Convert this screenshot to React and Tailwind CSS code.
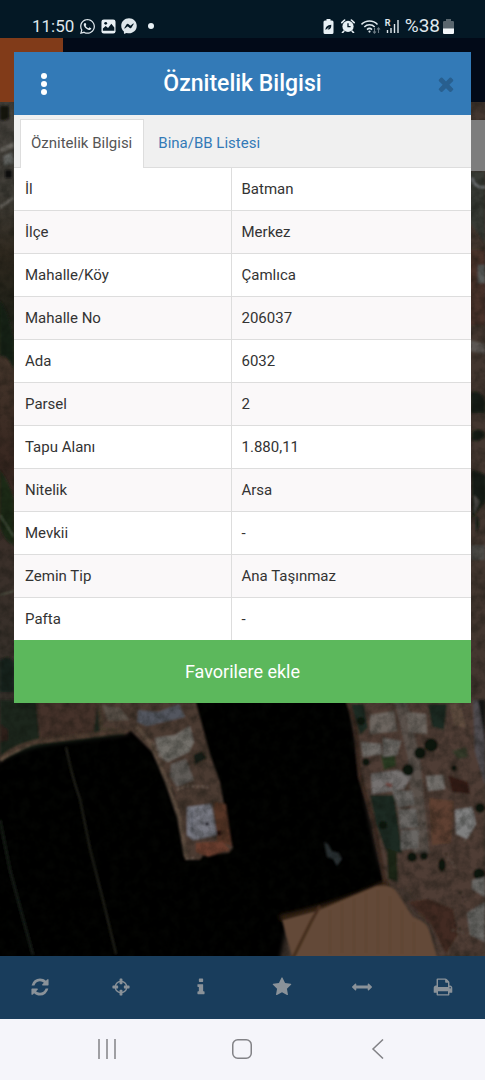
import React, { useState } from 'react'
import { FaWhatsapp, FaFacebookMessenger } from 'react-icons/fa'

const rows = [
  ['İl', 'Batman'],
  ['İlçe', 'Merkez'],
  ['Mahalle/Köy', 'Çamlıca'],
  ['Mahalle No', '206037'],
  ['Ada', '6032'],
  ['Parsel', '2'],
  ['Tapu Alanı', '1.880,11'],
  ['Nitelik', 'Arsa'],
  ['Mevkii', '-'],
  ['Zemin Tip', 'Ana Taşınmaz'],
  ['Pafta', '-'],
]

const tabs = ['Öznitelik Bilgisi', 'Bina/BB Listesi']

const CLOSE = 'M1490 1322q0 40-28 68l-136 136q-28 28-68 28t-68-28l-294-294-294 294q-28 28-68 28t-68-28l-136-136q-28-28-28-68t28-68l294-294-294-294q-28-28-28-68t28-68l136-136q28-28 68-28t68 28l294 294 294-294q28-28 68-28t68 28l136 136q28 28 28 68t-28 68l-294 294 294 294q28 28 28 68z'

const tools = [
  { label: 'Yenile', d: 'M1639 1056q0 5-1 7-64 268-268 434.5t-478 166.5q-146 0-282.5-55t-243.5-157l-129 129q-19 19-45 19t-45-19-19-45v-448q0-26 19-45t45-19h448q26 0 45 19t19 45-19 45l-137 137q71 66 161 102t187 36q134 0 250-65t186-179q11-17 53-117 8-23 30-23h192q13 0 22.5 9.5t9.5 22.5zm25-800v448q0 26-19 45t-45 19h-448q-26 0-45-19t-19-45 19-45l138-138q-148-137-349-137-134 0-250 65t-186 179q-11 17-53 117-8 23-30 23h-199q-13 0-22.5-9.5t-9.5-22.5v-7q65-268 270-434.5t480-166.5q146 0 284 55.5t245 156.5l130-129q19-19 45-19t45 19 19 45z' },
  { label: 'Konum', d: 'M1325 1024h-109q-26 0-45-19t-19-45v-128q0-26 19-45t45-19h109q-32-108-112.5-188.5t-188.5-112.5v109q0 26-19 45t-45 19h-128q-26 0-45-19t-19-45v-109q-108 32-188.5 112.5t-112.5 188.5h109q26 0 45 19t19 45v128q0 26-19 45t-45 19h-109q32 108 112.5 188.5t188.5 112.5v-109q0-26 19-45t45-19h128q26 0 45 19t19 45v109q108-32 188.5-112.5t112.5-188.5zm339-192v128q0 26-19 45t-45 19h-143q-37 161-154.5 278.5t-278.5 154.5v143q0 26-19 45t-45 19h-128q-26 0-45-19t-19-45v-143q-161-37-278.5-154.5t-154.5-278.5h-143q-26 0-45-19t-19-45v-128q0-26 19-45t45-19h143q37-161 154.5-278.5t278.5-154.5v-143q0-26 19-45t45-19h128q26 0 45 19t19 45v143q161 37 278.5 154.5t154.5 278.5h143q26 0 45 19t19 45z' },
  { label: 'Bilgi', d: 'M1216 1344v128q0 26-19 45t-45 19h-512q-26 0-45-19t-19-45v-128q0-26 19-45t45-19h64v-384h-64q-26 0-45-19t-19-45v-128q0-26 19-45t45-19h384q26 0 45 19t19 45v576h64q26 0 45 19t19 45zm-128-1152v192q0 26-19 45t-45 19h-256q-26 0-45-19t-19-45v-192q0-26 19-45t45-19h256q26 0 45 19t19 45z' },
  { label: 'Favoriler', d: 'M1728 647q0 22-26 48l-363 354 86 500q1 7 1 20 0 21-10.5 35.5t-30.5 14.5q-19 0-40-12l-449-236-449 236q-22 12-40 12-21 0-31.5-14.5t-10.5-35.5q0-6 2-20l86-500-364-354q-25-27-25-48 0-37 56-46l502-73 225-455q19-41 49-41t49 41l225 455 502 73q56 9 56 46z' },
  { label: 'Ölçüm', d: 'M1792 896q0 26-19 45l-256 256q-19 19-45 19t-45-19-19-45v-128h-1024v128q0 26-19 45t-45 19-45-19l-256-256q-19-19-19-45t19-45l256-256q19-19 45-19t45 19 19 45v128h1024v-128q0-26 19-45t45-19 45 19l256 256q19 19 19 45z' },
  { label: 'Yazdır', d: 'M448 1536h896v-256h-896v256zm0-640h896v-384h-160q-40 0-68-28t-28-68v-160h-640v640zm1152 64q0-26-19-45t-45-19-45 19-19 45 19 45 45 19 45-19 19-45zm128 0v416q0 13-9.5 22.5t-22.5 9.5h-224v160q0 40-28 68t-68 28h-960q-40 0-68-28t-28-68v-160h-224q-13 0-22.5-9.5t-9.5-22.5v-416q0-79 56.5-135.5t135.5-56.5h64v-544q0-40 28-68t68-28h672q40 0 88 20t76 48l152 152q28 28 48 76t20 88v256h64q79 0 135.5 56.5t56.5 135.5z' },
]

function Icon({ d, className }){
  return (
    <svg viewBox="0 0 1792 1792" className={className} fill="currentColor" aria-hidden="true">
      <path d={d} />
    </svg>
  )
}

function StatusBar(){
  return (
    <header className="flex h-[38px] items-end justify-between bg-[#041825] pr-[31px] pl-8 text-[#dfe7ec]">
      <div className="flex h-6 items-center gap-[5px]">
        <span className="text-[17px] leading-6">11:50</span>
        <FaWhatsapp className="size-[17px]" />
        <svg viewBox="0 0 16 16" className="size-[15px]" aria-hidden="true">
          <rect x="0.5" y="0.5" width="15" height="15" rx="2.5" fill="#e8f0f5" />
          <circle cx="5" cy="4.6" r="1.5" fill="#041825" />
          <path d="M2 12.5V10l3-2.5 2.5 2L11 5l3.2 4v3.5z" fill="#041825" />
        </svg>
        <FaFacebookMessenger className="size-4" />
        <span className="ml-[6px] size-[6px] rounded-full bg-[#e8f0f5]" />
      </div>

      <div className="flex h-6 items-center">
        {/* battery saver */}
        <svg viewBox="0 0 11 15" className="mr-[7px] h-[15px] w-[11px]" aria-hidden="true">
          <path d="M3.5 0h4v1.5H9a1.5 1.5 0 0 1 1.5 1.5v10.5A1.5 1.5 0 0 1 9 15H2a1.5 1.5 0 0 1-1.5-1.5V3A1.5 1.5 0 0 1 2 1.5h1.5z" fill="#e8f0f5" />
          <path d="M2.500 11q-.5-4.500 5.800-5.200Q8.500 11 4.500 10.500L7 7.500z" fill="#041825" />
        </svg>
        {/* alarm */}
        <svg viewBox="0 0 14 14" className="mr-[6px] size-[14px]" aria-hidden="true">
          <circle cx="7" cy="7.4" r="5.6" fill="#e8f0f5" />
          <path d="M.8 3.6 3.6 1M13.2 3.6 10.4 1M2.8 12.2 1.5 13.6M11.2 12.2l1.3 1.4" stroke="#e8f0f5" strokeWidth="1.6" strokeLinecap="round" />
          <path d="M7 4.2v3.4h2.6" fill="none" stroke="#041825" strokeWidth="1.3" />
        </svg>
        {/* wifi */}
        <svg viewBox="0 0 20 15" className="mr-1 h-[15px] w-5" aria-hidden="true">
          <g fill="none" stroke="#dfe7ec" strokeWidth="1.5">
            <path d="M.5 5.400a11 11 0 0 1 16 0" />
            <path d="M3.300 8a7.200 7.200 0 0 1 10.400 0" />
            <path d="M6 10.600a3.600 3.600 0 0 1 5 0" />
          </g>
          <circle cx="8.5" cy="12.6" r="1.1" fill="#dfe7ec" />
          <path d="M13.5 9v5m-1.500-1.500 1.500 1.700 1.500-1.700M17.500 14V9m-1.500 1.500L17.500 8.800l1.500 1.700" fill="none" stroke="#6d7b84" strokeWidth="1.1" />
        </svg>
        {/* roaming signal */}
        <div className="relative mr-[6px] h-[15px] w-[14px]">
          <span className="absolute top-0 left-0 text-[9px] leading-[8px] font-bold">R</span>
          <svg viewBox="0 0 14 15" className="size-full" aria-hidden="true">
            <path d="M2.500 11v3M6 9v5M9.500 5v9M13 1v13" stroke="#dfe7ec" strokeWidth="1.4" />
          </svg>
        </div>
        <span className="text-[19px] leading-6">%38</span>
        <svg viewBox="0 0 11 15" className="ml-[3px] h-[15px] w-[11px]" aria-hidden="true">
          <path d="M3 0h5v2h1.5A1.300 1.300 0 0 1 11 3.300V10H0V3.300A1.300 1.300 0 0 1 1.300 2H3z" fill="#59666e" />
          <path d="M0 9.500h11v4A1.300 1.300 0 0 1 9.700 15H1.300A1.300 1.300 0 0 1 0 13.500z" fill="#f3f7fa" />
        </svg>
      </div>
    </header>
  )
}

// dimmed aerial imagery
function SatelliteMap(){
  return (
    <svg viewBox="0 38 485 918" preserveAspectRatio="xMidYMax slice" className="absolute inset-0 size-full" aria-hidden="true">
      <defs>
        <filter id="grain" x="0" y="0" width="100%" height="100%" colorInterpolationFilters="sRGB">
          <feTurbulence type="fractalNoise" baseFrequency="0.1" numOctaves="4" seed="4" />
          <feColorMatrix values="0 0 0 0 0.04  0 0 0 0 0.05  0 0 0 0 0.03  1.6 0 0 0 -0.55" />
        </filter>
        <filter id="soft"><feGaussianBlur stdDeviation="0.8" /></filter>
        <filter id="edge"><feGaussianBlur stdDeviation="2" /></filter>
        <linearGradient id="left" x1="0" y1="0" x2="0" y2="1">
          <stop offset="0" stopColor="#48443f" />
          <stop offset="0.15" stopColor="#403d37" />
          <stop offset="0.25" stopColor="#30291f" />
          <stop offset="0.36" stopColor="#1f2118" />
          <stop offset="0.42" stopColor="#44352b" />
          <stop offset="0.6" stopColor="#382720" />
          <stop offset="0.75" stopColor="#3b302a" />
          <stop offset="1" stopColor="#35302a" />
        </linearGradient>
      </defs>

      <rect y="38" width="485" height="918" fill="#43362f" />
      <rect y="102" width="20" height="605" fill="url(#left)" />
      <g filter="url(#soft)">
        {/* left margin */}
        <path d="M0 106h9v12q-5 4-9 2z" fill="#16130f" />
        <path d="M0 148l14-6v5L0 153zM0 205l14-9v3L0 209z" fill="#68655f" />
        <path d="M3 156l9-4 2 11-10 3z" fill="#666765" />
        <path d="M5 170h7v8H5z" fill="#11100e" />
        <path d="M0 300q8 10 14 40v30q-6-16-14-14z" fill="#172216" />
        <path d="M0 470q9 12 14 30v45q-9-3-14-18z" fill="#1c2c18" />
        <path d="M0 515l14 22M0 595l14-4" stroke="#64705a" strokeWidth="1" />
        <path d="M0 660q9-6 14 2v30H0z" fill="#18221a" />

        {/* right margin */}
        <path d="M470 171h15v72l-15-20z" fill="#383b35" />
        <path d="M472 178q3 11 13 9" fill="none" stroke="#73777a" strokeWidth="2" />
        <path d="M470 250h15v75h-15z" fill="#4a332a" />
        <path d="M470 340l15 4v10l-15-3z" fill="#5b5752" />
        <path d="M478 265h7v18h-7z" fill="#5a5b5a" />
        <path d="M471 393q10-4 14 8v12h-14zM472 432q8-5 13 3-5 8-13 5zM472 470l14 5v25l-14 18z" fill="#121c12" />
        <path d="M474 495l6 7-6 12zM471 545h14v15h-14z" fill="#4e4c47" />
        <path d="M476 515q6 8 0 18z" fill="#101a12" />

        {/* upper-left lots */}
        <path d="M0 700h130l-6 36L0 762z" fill="#1d251d" />
        <path d="M36 700h62l-5 36-53 7z" fill="#45332a" />
        <path d="M0 724l8 6v10l-8 2z" fill="#31201a" />
        <path d="M97 700h43l-8 25-32 8z" fill="#463a2e" />
      </g>

      {/* dark fields */}
      <path d="M-5 764q30-18 66-21l66-9 10-20 55-16h157l10 65 7 40 12 55 8 25-8 10-90 28-8 40H-5z" fill="#020302" filter="url(#edge)" />

      <g filter="url(#soft)">
        <path d="M0 760q14-14 40-19l85-10 15-10" fill="none" stroke="#4f3d30" strokeWidth="5" />
        <path d="M0 760l30-15" stroke="#6b5848" strokeWidth="1.5" />
        <path d="M66 747q6 30 14 52l10 50 14 55 12 50" fill="none" stroke="#25261f" strokeWidth="2" />
        <path d="M0 820l10 50 8 30 15 55" fill="none" stroke="#171c18" strokeWidth="3" />
        <path d="M324 842l4 2 4 7 7 2 3 6-5 7-4-7-6-2z" fill="#2c3335" />

        {/* peninsula */}
        <path d="M100 702h96l14 52 10 28 9 50 4 16-4 5-25 2-4 5-15 0-4-32-7-35-18-37-26-26-27-3z" fill="#4b3b31" />
        <path d="M136 726l14 16 17 40 12 35 7 40" fill="none" stroke="#604f42" strokeWidth="4" />
        <path d="M102 705l18 3 10 12-22 1z" fill="#5a5149" />
        <path d="M138 710l20 2 21-8 6 13-38 9-10-4z" fill="#53565e" />
        <path d="M155 738l20-3 15-9 4 16-5 10-21 10-9-5z" fill="#736f6a" />
        <path d="M171 764l15-5 8 21-17 7-7-11z" fill="#605c58" />
        <path d="M187 807l24-3 6 31-24 5-6-5z" fill="#787983" />
        <path d="M214 802l12 2 6 42-15-5z" fill="#573427" />
        <path d="M196 843l26-2 8 9-22 7-12-5z" fill="#6a3e2f" />
        <path d="M193 755l9-4 5 7-12 7z" fill="#171d15" />
        <path d="M153 743l10 17M177 790l9-4 22 1M186 859l10-1" stroke="#7b6b60" strokeWidth="1.5" strokeDasharray="3 2" fill="none" />
        <path d="M192 810v24M204 807l2 6M201 823h4" stroke="#484b53" strokeWidth="1" />
        <circle cx="207" cy="824" r="2" fill="#1c1c24" />
        <circle cx="219" cy="833" r="2.5" fill="#210f0b" />

        {/* settlement */}
        <path d="M347 700h138v256h-45l-10-35-20-30-24-7-10-40-8-45z" fill="#503e36" />
        <path d="M347 700l8 22 5 55 14 45 12 65" fill="none" stroke="#3c2c20" strokeWidth="4" />
        <path d="M394 700h12l14 58 9 95h-16l-5-95z" fill="#5a514b" />
        <path d="M473 700l12 0v85l-10-33z" fill="#504c50" />
        <path d="M478 700h7v42z" fill="#171716" />
        <path d="M351 704h13l4 24-8 7zM370 795h24l6 40 2 18-16-2-10-27z" fill="#1e2b20" />
        <path d="M428 704h19l-3 26-12-3z" fill="#1c2c22" />
        <path d="M381 755l14 0 1 11-12 4z" fill="#2a3b22" />
        <path d="M370 715l24-4 3 20-27 3zM407 712l19 2 1 20-18-2z" fill="#6d6660" />
        <path d="M361 742l20 2 1 10-19 3zM383 738l18 3-4 14-14 2z" fill="#726e6a" />
        <path d="M371 774l27-4 13 7-7 12-32 5z" fill="#747170" />
        <path d="M392 790l20 1 3 13-17 4zM398 809l18 0 2 18-18 2zM401 830h18l-1 18-17 2z" fill="#696663" />
        <path d="M426 776l17-1 2 14-17 2z" fill="#76726e" />
        <path d="M455 810l17-3 4 17-9 15-11-5z" fill="#808080" />
        <path d="M429 798l25 3-3 42-19 2z" fill="#5e4130" />
        <path d="M450 704h10l6 24-12-3z" fill="#604d3f" />
        <path d="M448 775l20 7 2 12-18-2z" fill="#341d19" />
        <path d="M386 784l6 2" stroke="#7c4842" strokeWidth="3" />
        <path d="M452 751l14-4 2 10-10 2z" fill="#343b2a" />
        <g fill="#10170f">
          <circle cx="431" cy="745" r="7" />
          <circle cx="420" cy="753" r="6" />
          <circle cx="408" cy="770" r="6" />
          <circle cx="480" cy="808" r="5" />
          <circle cx="383" cy="825" r="4" />
          <circle cx="361" cy="721" r="4" />
          <circle cx="366" cy="762" r="4" />
          <circle cx="412" cy="857" r="5" />
          <circle cx="424" cy="856" r="4" />
          <ellipse cx="442" cy="865" rx="4" ry="7" />
          <circle cx="479" cy="874" r="6" />
          <circle cx="454" cy="768" r="3" />
        </g>
        <path d="M387 848l10 4 1 30-10-3z" fill="#1c2619" />
        <path d="M472 880l13-3v20l-13-8zM467 913l18-11v40l-15-7z" fill="#696765" />
        <path d="M408 902l20-3 25 10 5 25-12 20-15-30z" fill="#432c23" />
        <path d="M424 823v4M445 854h6M460 892l5 10M455 925l7 5" stroke="#15110e" strokeWidth="2" strokeDasharray="2 3" />
        <path d="M448 858l8 10M452 930l12 3M464 840l4 3" stroke="#8a7b71" strokeWidth="1" strokeDasharray="2 3" />
      </g>

      <rect y="102" width="485" height="854" filter="url(#grain)" opacity="0.45" />

      {/* ploughed field */}
      <path d="M280 918q60-13 107-35" fill="none" stroke="#3b2519" strokeWidth="5" filter="url(#edge)" />
      <g filter="url(#soft)">
        <path d="M282 920l34-9 60-25q14-2 20 5l17 26q14 5 16 13l9 30H293z" fill="#644937" />
        <path d="M320 906l-8 14-20 40" fill="none" stroke="#422b1f" strokeWidth="3" />
        <path d="M330 910v44M342 903v50M354 898v56M366 893v60M378 890v64M390 896v58M402 910v44M414 922v32" stroke="#5e4433" strokeWidth="2" />
      </g>
    </svg>
  )
}

function AttributeDialog(){
  const [active, setActive] = useState(0)
  const [favorite, setFavorite] = useState(false)

  return (
    <section role="dialog" aria-labelledby="dialog-title" className="relative mx-[14px] mt-[14px] bg-white">
      {/* Title */}
      <div className="flex h-[63px] items-center justify-between bg-[#337ab7] px-[10px] text-white">
        <button type="button" aria-label="Menü" className="flex size-10 flex-col items-center justify-center gap-[2px]">
          <span className="size-[6px] rounded-full bg-white" />
          <span className="size-[6px] rounded-full bg-white" />
          <span className="size-[6px] rounded-full bg-white" />
        </button>
        <h1 id="dialog-title" className="text-[23px] leading-7 font-medium">Öznitelik Bilgisi</h1>
        <button type="button" aria-label="Kapat" className="flex size-10 items-center justify-end pr-1">
          <Icon d={CLOSE} className="size-[22px] text-[#285f8f]" />
        </button>
      </div>

      {/* Tabs */}
      <div role="tablist" className="flex h-[53px] items-end border-b border-[#dddddd] bg-[#f0f0f0] px-[6px]">
        {tabs.map((tab, i) => (
          <button
            key={tab}
            type="button"
            role="tab"
            aria-selected={active === i}
            onClick={() => setActive(i)}
            className={active === i
              ? '-mb-px h-[49px] border border-b-0 border-[#dddddd] bg-white pr-[11px] pb-[2px] pl-[10px] text-[15px] text-[#555555]'
              : 'h-12 px-[14px] text-[15px] text-[#337ab7]'}
          >
            {tab}
          </button>
        ))}
      </div>

      {/* Attributes */}
      <table className="w-full table-fixed border-collapse text-left text-[15px] leading-5 text-[#333333]">
        <tbody>
          {rows.map(([name, value]) => (
            <tr key={name} className="h-[43px] border-b border-[#dddddd] first:h-[42px] last:border-b-0 even:bg-[#faf8f9]">
              <th scope="row" className="w-[217px] border-r border-[#dddddd] px-[11px] font-normal">{name}</th>
              <td className="px-[10px]">{value}</td>
            </tr>
          ))}
        </tbody>
      </table>

      <button
        type="button"
        aria-pressed={favorite}
        onClick={() => setFavorite(!favorite)}
        className="h-[63px] w-full bg-[#5cb85c] text-lg text-white"
      >
        Favorilere ekle
      </button>
    </section>
  )
}

export default function App(){
  return (
    <div className="flex min-h-screen flex-col bg-black font-[Roboto,sans-serif]">
      <StatusBar />

      <main className="relative flex-1 overflow-hidden">
        <SatelliteMap />
        {/* page header and map control behind the dialog */}
        <div className="absolute inset-x-0 top-0 h-16 bg-[#020a18]">
          <div className="h-full w-[63px] bg-[#813b19]" />
        </div>
        <div className="absolute top-[82px] right-0 h-[51px] w-10 bg-[#7d7d7d]" />
        <AttributeDialog />
      </main>

      {/* Map tools */}
      <div className="grid h-[63px] grid-cols-6 bg-[#193d5c] pr-[2px] pb-[2px] text-[#8a9299]">
        {tools.map((tool) => (
          <button key={tool.label} type="button" aria-label={tool.label} className="flex items-center justify-center">
            <Icon d={tool.d} className="size-5" />
          </button>
        ))}
      </div>

      {/* System navigation */}
      <nav className="grid h-[61px] grid-cols-3 bg-[#f5f5fa] px-[39px] pb-[2px] text-[#828286]">
        <button type="button" aria-label="Son uygulamalar" className="flex items-center justify-center">
          <svg viewBox="0 0 20 20" className="size-5" fill="none" stroke="currentColor" strokeWidth="1.5">
            <path d="M2 0v20M10 0v20M18 0v20" />
          </svg>
        </button>
        <button type="button" aria-label="Ana ekran" className="flex items-center justify-center">
          <svg viewBox="0 0 20 20" className="size-5" fill="none" stroke="currentColor" strokeWidth="1.5">
            <rect x="0.75" y="0.75" width="18.5" height="18.5" rx="5" />
          </svg>
        </button>
        <button type="button" aria-label="Geri" className="flex items-center justify-center">
          <svg viewBox="0 0 20 20" className="size-5" fill="none" stroke="currentColor" strokeWidth="1.5">
            <path d="M15 0.500 5 10l10 9.500" />
          </svg>
        </button>
      </nav>
    </div>
  )
}
